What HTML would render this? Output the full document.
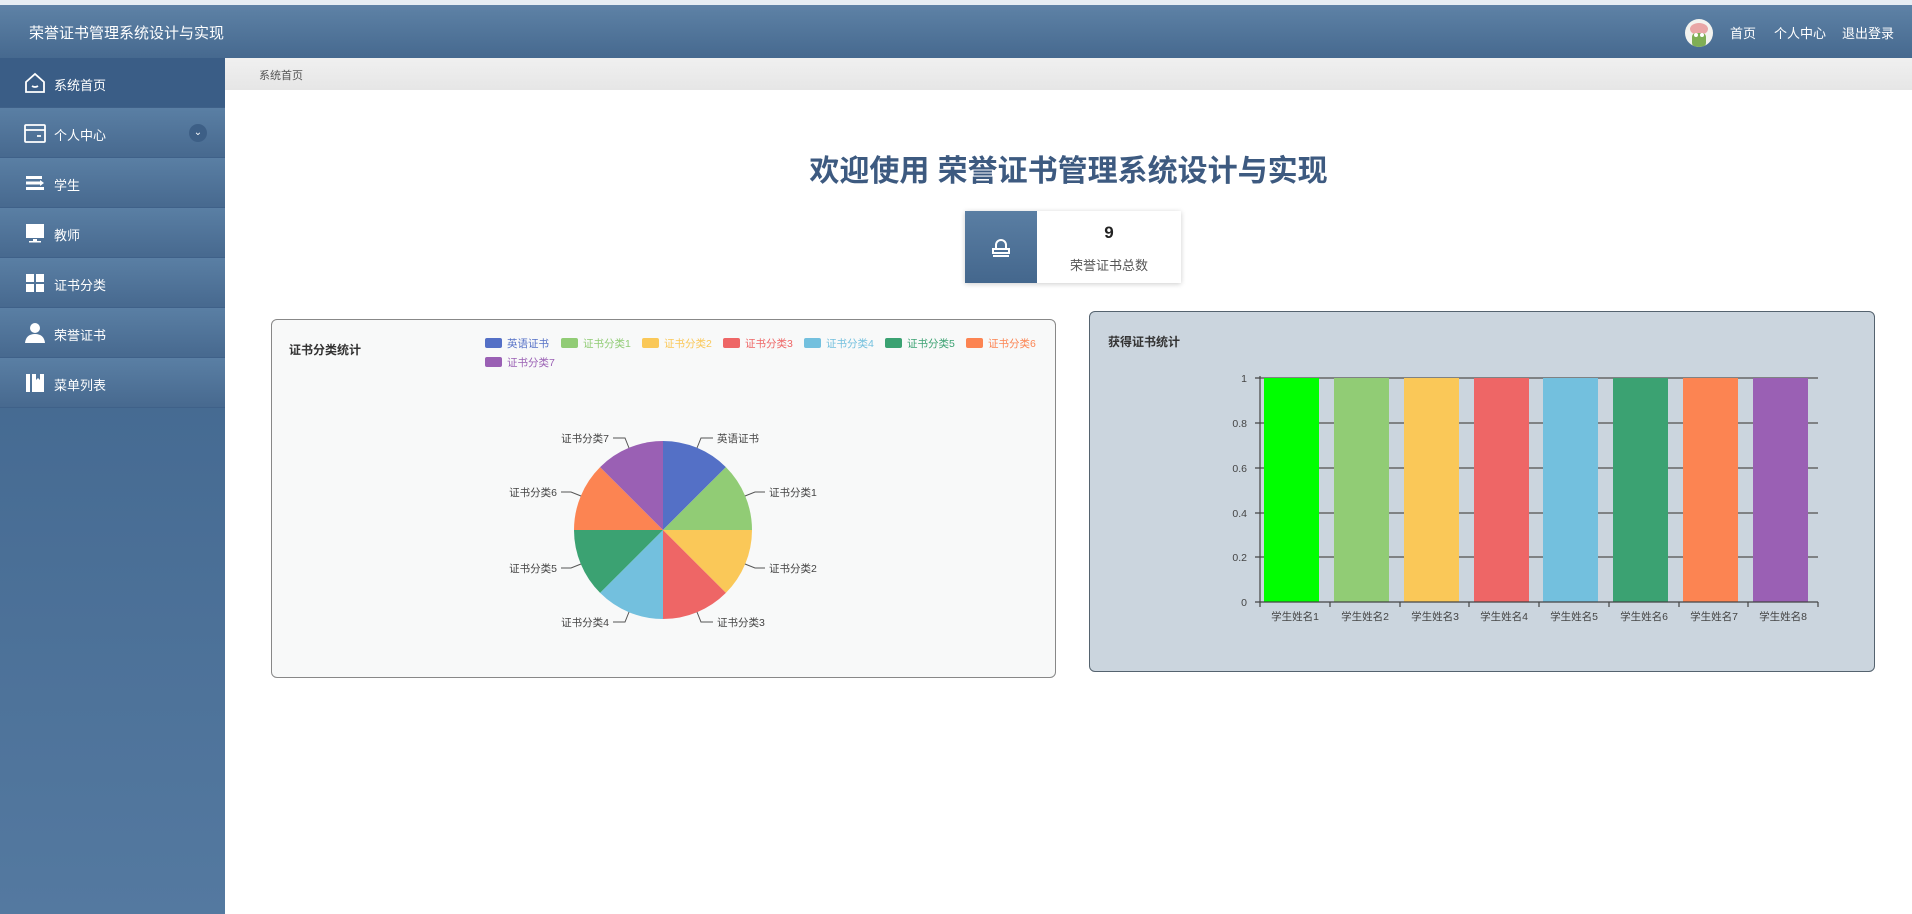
<!DOCTYPE html>
<html><head><meta charset="utf-8"><style>
*{margin:0;padding:0;box-sizing:border-box}
body{width:1912px;height:914px;overflow:hidden;background:#fff;font-family:"Liberation Sans","Noto Sans CJK SC",sans-serif;position:relative}
.top{position:absolute;left:0;top:0;width:1912px;height:5px;background:#e6edf3}
.hdr{position:absolute;left:0;top:5px;width:1912px;height:53px;background:linear-gradient(#5e82a6,#46698f)}
.hdr .t{position:absolute;left:29px;top:17px;color:#fff;font-size:15px}
.hdr .nav{position:absolute;top:18px;color:#fff;font-size:13px}
.av{position:absolute;left:1685px;top:14px;width:28px;height:28px;border-radius:50%;background:#f3f3ef;overflow:hidden}
.side{position:absolute;left:0;top:58px;width:225px;height:856px;background:linear-gradient(#3c6189,#5479a0)}
.mi{position:absolute;left:0;width:225px;height:50px;background:linear-gradient(#5a7fa4,#47698f);border-bottom:1px solid #3f6189;color:#fff;font-size:13px}
.mi.act{background:#3a5d86}
.mi span{position:absolute;left:54px;top:17px}
.mi svg{position:absolute;left:24px;top:14px}
.bc{position:absolute;left:225px;top:58px;width:1687px;height:32px;background:linear-gradient(#f0f0f0,#e6e6e6)}
.bc span{position:absolute;left:34px;top:9px;font-size:11px;color:#555}
h1{position:absolute;left:225px;width:1687px;top:146px;text-align:center;font-size:30px;color:#3d5a80;font-weight:bold}
.stat{position:absolute;left:965px;top:211px;width:216px;height:72px;box-shadow:0 1px 5px rgba(0,0,0,.2);background:#fff}
.stat .ic{position:absolute;left:0;top:0;width:72px;height:72px;background:linear-gradient(#5a7ea3,#44678d)}
.card{position:absolute;border-radius:6px}
.ct{position:absolute;font-size:12px;font-weight:bold;color:#333}
</style></head><body>
<div class="top"></div>
<div class="hdr"><div class="t">荣誉证书管理系统设计与实现</div>
<div class="av"><svg width="28" height="28"><ellipse cx="14" cy="10" rx="9" ry="6" fill="#e9a6a6"/><rect x="7" y="14" width="14" height="14" rx="4" fill="#7fae55"/><circle cx="11" cy="16" r="2" fill="#fff"/><circle cx="17" cy="16" r="2" fill="#fff"/></svg></div>
<div class="nav" style="left:1730px">首页</div><div class="nav" style="left:1774px">个人中心</div><div class="nav" style="left:1842px">退出登录</div></div>
<div class="side">
<div class="mi act" style="top:0"><svg width="22" height="22" viewBox="0 0 22 22" fill="none" stroke="#fff" stroke-width="1.8"><path d="M2 10L11 2l9 8v10H2z"/><path d="M8 14q3 2 6 0"/></svg><span>系统首页</span></div>
<div class="mi" style="top:50px"><svg width="22" height="22" viewBox="0 0 22 22" fill="none" stroke="#fff" stroke-width="1.8"><rect x="1" y="3" width="20" height="17" rx="1"/><path d="M1 8h20M13 14h4"/></svg><span>个人中心</span><div style="position:absolute;left:189px;top:16px;width:18px;height:18px;border-radius:50%;background:#3d5f86;color:#fff;font-size:10px;text-align:center;line-height:17px">⌄</div></div>
<div class="mi" style="top:100px"><svg width="22" height="22" viewBox="0 0 22 22" fill="#fff"><rect x="2" y="4" width="16" height="3"/><rect x="2" y="9.5" width="14" height="3"/><rect x="2" y="15" width="18" height="3"/><path d="M16 8l4 3-4 3z"/></svg><span>学生</span></div>
<div class="mi" style="top:150px"><svg width="22" height="22" viewBox="0 0 22 22" fill="#fff"><rect x="2" y="2" width="18" height="14"/><rect x="9" y="17" width="4" height="2"/><rect x="5" y="19" width="12" height="1.5"/></svg><span>教师</span></div>
<div class="mi" style="top:200px"><svg width="22" height="22" viewBox="0 0 22 22" fill="#fff"><rect x="2" y="2" width="8" height="8"/><rect x="12" y="2" width="8" height="8"/><rect x="2" y="12" width="8" height="8"/><rect x="12" y="12" width="8" height="8"/></svg><span>证书分类</span></div>
<div class="mi" style="top:250px"><svg width="22" height="22" viewBox="0 0 22 22" fill="#fff"><circle cx="11" cy="6" r="5"/><path d="M1 21q1-9 10-9t10 9z"/></svg><span>荣誉证书</span></div>
<div class="mi" style="top:300px"><svg width="22" height="22" viewBox="0 0 22 22" fill="#fff"><rect x="2" y="2" width="4" height="18"/><path d="M8 2h12v18H8zM12 2v6l2-2 2 2V2" /></svg><span>菜单列表</span></div>
</div>
<div class="bc"><span>系统首页</span></div>
<h1>欢迎使用 荣誉证书管理系统设计与实现</h1>
<div class="stat"><div class="ic"><svg width="72" height="72" viewBox="0 0 72 72" fill="none" stroke="#fff" stroke-width="2"><path d="M31 38v-4a5 5 0 1 1 10 0v4M28 38h16v4H28zM28 45h16"/></svg></div>
<div style="position:absolute;left:72px;width:144px;top:12px;text-align:center;font-size:17px;font-weight:bold;color:#222">9</div>
<div style="position:absolute;left:72px;width:144px;top:44px;text-align:center;font-size:13px;color:#555">荣誉证书总数</div></div>

<div class="card" style="left:271px;top:319px;width:785px;height:359px;background:#f8f9f9;border:1.5px solid #888"></div>
<div class="ct" style="left:289px;top:341px">证书分类统计</div>
<svg style="position:absolute;left:271px;top:319px" width="785" height="359" font-size="10.5" font-family="Liberation Sans,Noto Sans CJK SC,sans-serif">
<g>
<rect x="214" y="19" width="17" height="10" rx="2" fill="#5470c6"/><text x="236" y="28" fill="#5470c6">英语证书</text>
<rect x="290" y="19" width="17" height="10" rx="2" fill="#91cc75"/><text x="312" y="28" fill="#91cc75">证书分类1</text>
<rect x="371" y="19" width="17" height="10" rx="2" fill="#fac858"/><text x="393" y="28" fill="#fac858">证书分类2</text>
<rect x="452" y="19" width="17" height="10" rx="2" fill="#ee6666"/><text x="474" y="28" fill="#ee6666">证书分类3</text>
<rect x="533" y="19" width="17" height="10" rx="2" fill="#73c0de"/><text x="555" y="28" fill="#73c0de">证书分类4</text>
<rect x="614" y="19" width="17" height="10" rx="2" fill="#3ba272"/><text x="636" y="28" fill="#3ba272">证书分类5</text>
<rect x="695" y="19" width="17" height="10" rx="2" fill="#fc8452"/><text x="717" y="28" fill="#fc8452">证书分类6</text>
<rect x="214" y="38" width="17" height="10" rx="2" fill="#9a60b4"/><text x="236" y="47" fill="#9a60b4">证书分类7</text>
</g>
<g transform="translate(392,211)">
<path d="M0 0V-89A89 89 0 0 1 62.9-62.9z" fill="#5470c6"/>
<path d="M0 0L62.9-62.9A89 89 0 0 1 89 0z" fill="#91cc75"/>
<path d="M0 0H89A89 89 0 0 1 62.9 62.9z" fill="#fac858"/>
<path d="M0 0L62.9 62.9A89 89 0 0 1 0 89z" fill="#ee6666"/>
<path d="M0 0V89A89 89 0 0 1-62.9 62.9z" fill="#73c0de"/>
<path d="M0 0L-62.9 62.9A89 89 0 0 1-89 0z" fill="#3ba272"/>
<path d="M0 0H-89A89 89 0 0 1-62.9-62.9z" fill="#fc8452"/>
<path d="M0 0L-62.9-62.9A89 89 0 0 1 0-89z" fill="#9a60b4"/>
<g fill="none" stroke="#555" stroke-width="1">
<path d="M34-82L38-92H50M82-34L92-38H102M82 34L92 38H102M34 82L38 92H50M-34-82L-38-92H-50M-82-34L-92-38H-102M-82 34L-92 38H-102M-34 82L-38 92H-50"/></g>
<g fill="#444">
<text x="54" y="-88">英语证书</text><text x="106" y="-34">证书分类1</text><text x="106" y="42">证书分类2</text><text x="54" y="96">证书分类3</text>
<text x="-54" y="-88" text-anchor="end">证书分类7</text><text x="-106" y="-34" text-anchor="end">证书分类6</text><text x="-106" y="42" text-anchor="end">证书分类5</text><text x="-54" y="96" text-anchor="end">证书分类4</text></g>
</g></svg>

<div class="card" style="left:1089px;top:311px;width:786px;height:361px;background:#cbd5de;border:1.5px solid #55636f"></div>
<div class="ct" style="left:1108px;top:333px">获得证书统计</div>
<svg style="position:absolute;left:0;top:0" width="1912" height="914" font-size="10.5" font-family="Liberation Sans,Noto Sans CJK SC,sans-serif">
<g stroke="#666" stroke-width="1.5">
<path d="M1260 378H1818M1260 423H1818M1260 468H1818M1260 513H1818M1260 557H1818"/></g>
<g>
<rect x="1264" y="378" width="55" height="224" fill="#00ff00"/>
<rect x="1334" y="378" width="55" height="224" fill="#91cc75"/>
<rect x="1404" y="378" width="55" height="224" fill="#fac858"/>
<rect x="1474" y="378" width="55" height="224" fill="#ee6666"/>
<rect x="1543" y="378" width="55" height="224" fill="#73c0de"/>
<rect x="1613" y="378" width="55" height="224" fill="#3ba272"/>
<rect x="1683" y="378" width="55" height="224" fill="#fc8452"/>
<rect x="1753" y="378" width="55" height="224" fill="#9a60b4"/></g>
<g stroke="#444" stroke-width="1.2" fill="none"><path d="M1260 376V603M1255 378h5M1255 423h5M1255 468h5M1255 513h5M1255 557h5M1255 602h5M1260 602H1818M1260 602v5M1330 602v5M1400 602v5M1469 602v5M1539 602v5M1609 602v5M1679 602v5M1748 602v5M1818 602v5"/></g>
<g fill="#444" text-anchor="end"><text x="1247" y="382">1</text><text x="1247" y="427">0.8</text><text x="1247" y="472">0.6</text><text x="1247" y="517">0.4</text><text x="1247" y="561">0.2</text><text x="1247" y="606">0</text></g>
<g fill="#444" text-anchor="middle"><text x="1295" y="620">学生姓名1</text><text x="1365" y="620">学生姓名2</text><text x="1435" y="620">学生姓名3</text><text x="1504" y="620">学生姓名4</text><text x="1574" y="620">学生姓名5</text><text x="1644" y="620">学生姓名6</text><text x="1714" y="620">学生姓名7</text><text x="1783" y="620">学生姓名8</text></g>
</svg>
</body></html>
